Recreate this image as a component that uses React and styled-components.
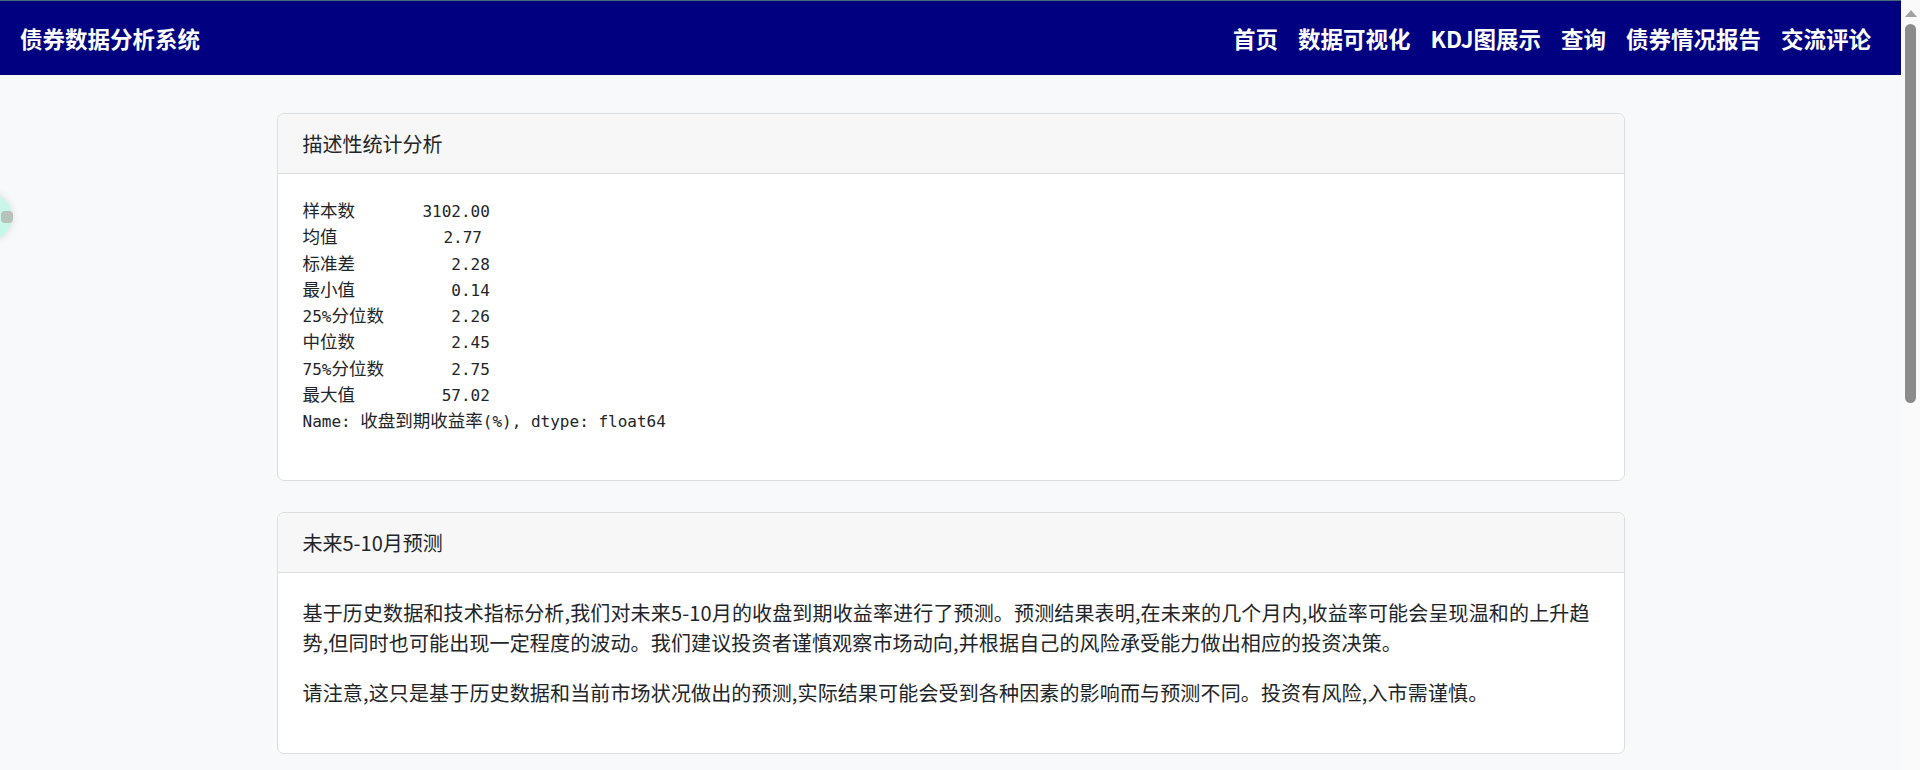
import React from "react";
import styled, { createGlobalStyle } from "styled-components";

const GlobalStyle = createGlobalStyle`
  body {
    margin: 0;
    background-color: #f8f9fa;
    color: #212529;
    font-family: "Noto Sans CJK SC", "Noto Sans", sans-serif;
  }
`

// 页面宽度留出右侧滚动条的位置
const Page = styled.div`
  margin-right: 19px;
`

const Navbar = styled.nav`
  display: flex;
  align-items: center;
  justify-content: space-between;
  height: 74px;
  padding: 0 20px;
  background-color: #000080;
  border-top: 1px solid #3d6b78;
`

const Brand = styled.a`
  color: #ffffff;
  font-size: 22.5px;
  font-weight: 700;
  text-decoration: none;
`

const NavLinks = styled.div`
  display: flex;
`

const NavLink = styled.a`
  padding: 0 10px;
  color: #ffffff;
  font-size: 22.5px;
  font-weight: 700;
  text-decoration: none;
  cursor: pointer;
`

const Main = styled.main`
  min-height: 1395px;
  padding-top: 38px;
`

const Container = styled.div`
  width: 1348px;
  margin: 0 auto;
`

const Card = styled.div`
  background-color: #ffffff;
  border: 1px solid #dcdddf;
  border-radius: 7px;
  margin-bottom: 31px;
  overflow: hidden;
`

const CardHeader = styled.div`
  padding: 14.5px 25px;
  font-size: 20px;
  line-height: 30px;
  background-color: #f7f7f7;
  border-bottom: 1px solid #dcdddf;
`

const CardBody = styled.div`
  padding: 25px;
`

const Pre = styled.pre`
  margin: 0 0 20px;
  font-family: "DejaVu Sans Mono", "Liberation Mono", "Noto Sans CJK SC", monospace;
  font-size: 16px;
  line-height: 26.25px;
  color: #212529;
`

const Wide = styled.span`
  font-family: "Noto Sans CJK SC", sans-serif;
  font-size: 17.5px;
  line-height: 1;
`

const Text = styled.p`
  margin: 0 0 20px;
  font-size: 20px;
  line-height: 30px;
  letter-spacing: 0.15px;
`

const Bubble = styled.div`
  position: fixed;
  left: -36px;
  top: 193px;
  width: 48px;
  height: 48px;
  border-radius: 50%;
  background-color: #c8f7e7;
  box-shadow: 0 0 8px rgba(0, 0, 0, 0.12);
  display: flex;
  align-items: center;
  justify-content: flex-end;
`

const BubbleIcon = styled.span`
  width: 12px;
  height: 12px;
  margin-right: -1px;
  border-radius: 4px;
  background-color: #b7c2bd;
`

const ScrollTrack = styled.div`
  position: fixed;
  top: 1px;
  right: 0;
  bottom: 0;
  width: 19px;
  background-color: #fafafa;
  display: flex;
  flex-direction: column;
  align-items: center;
`

const ScrollArrow = styled.span`
  margin-top: 9px;
  width: 0;
  height: 0;
  border-left: 6px solid transparent;
  border-right: 6px solid transparent;
  border-bottom: 7px solid #a3a3a3;
`

const ScrollThumb = styled.span`
  margin-top: 7px;
  width: 11px;
  height: 379px;
  border-radius: 6px;
  background-color: #8b8b8b;
`

const navItems = ["首页", "数据可视化", "KDJ图展示", "查询", "债券情况报告", "交流评论"]

const stats = [
  ["样本数", "3102.00"],
  ["均值", "2.77"],
  ["标准差", "2.28"],
  ["最小值", "0.14"],
  ["25%分位数", "2.26"],
  ["中位数", "2.45"],
  ["75%分位数", "2.75"],
  ["最大值", "57.02"],
]

// pandas 风格的对齐: 标签补到6位, 再空4格, 数值右对齐到7位
const statLines = stats.map(([label, value]) =>
  label + " ".repeat(6 - label.length + 4 + 7 - value.length) + value
)
statLines.push("Name: 收盘到期收益率(%), dtype: float64")

const MonoLine = ({ text }) =>
  text.split(/([\u4e00-\u9fff]+)/).map((part, i) =>
    /[\u4e00-\u9fff]/.test(part) ? <Wide key={i}>{part}</Wide> : part
  )

export default function App() {
  return (
    <>
      <GlobalStyle />
      <Page>
        <Navbar>
          <Brand>债券数据分析系统</Brand>
          <NavLinks>
            {navItems.map((item) => (
              <NavLink key={item}>{item}</NavLink>
            ))}
          </NavLinks>
        </Navbar>
        <Main>
          <Container>
            <Card>
              <CardHeader>描述性统计分析</CardHeader>
              <CardBody>
                <Pre>
                  {statLines.map((line, i) => (
                    <React.Fragment key={i}>
                      <MonoLine text={line} />
                      {"\n"}
                    </React.Fragment>
                  ))}
                </Pre>
              </CardBody>
            </Card>
            <Card>
              <CardHeader>未来5-10月预测</CardHeader>
              <CardBody>
                <Text>
                  基于历史数据和技术指标分析,我们对未来5-10月的收盘到期收益率进行了预测。预测结果表明,在未来的几个月内,收益率可能会呈现温和的上升趋势,但同时也可能出现一定程度的波动。我们建议投资者谨慎观察市场动向,并根据自己的风险承受能力做出相应的投资决策。
                </Text>
                <Text>
                  请注意,这只是基于历史数据和当前市场状况做出的预测,实际结果可能会受到各种因素的影响而与预测不同。投资有风险,入市需谨慎。
                </Text>
              </CardBody>
            </Card>
          </Container>
        </Main>
      </Page>
      <Bubble>
        <BubbleIcon />
      </Bubble>
      <ScrollTrack>
        <ScrollArrow />
        <ScrollThumb />
      </ScrollTrack>
    </>
  )
}
